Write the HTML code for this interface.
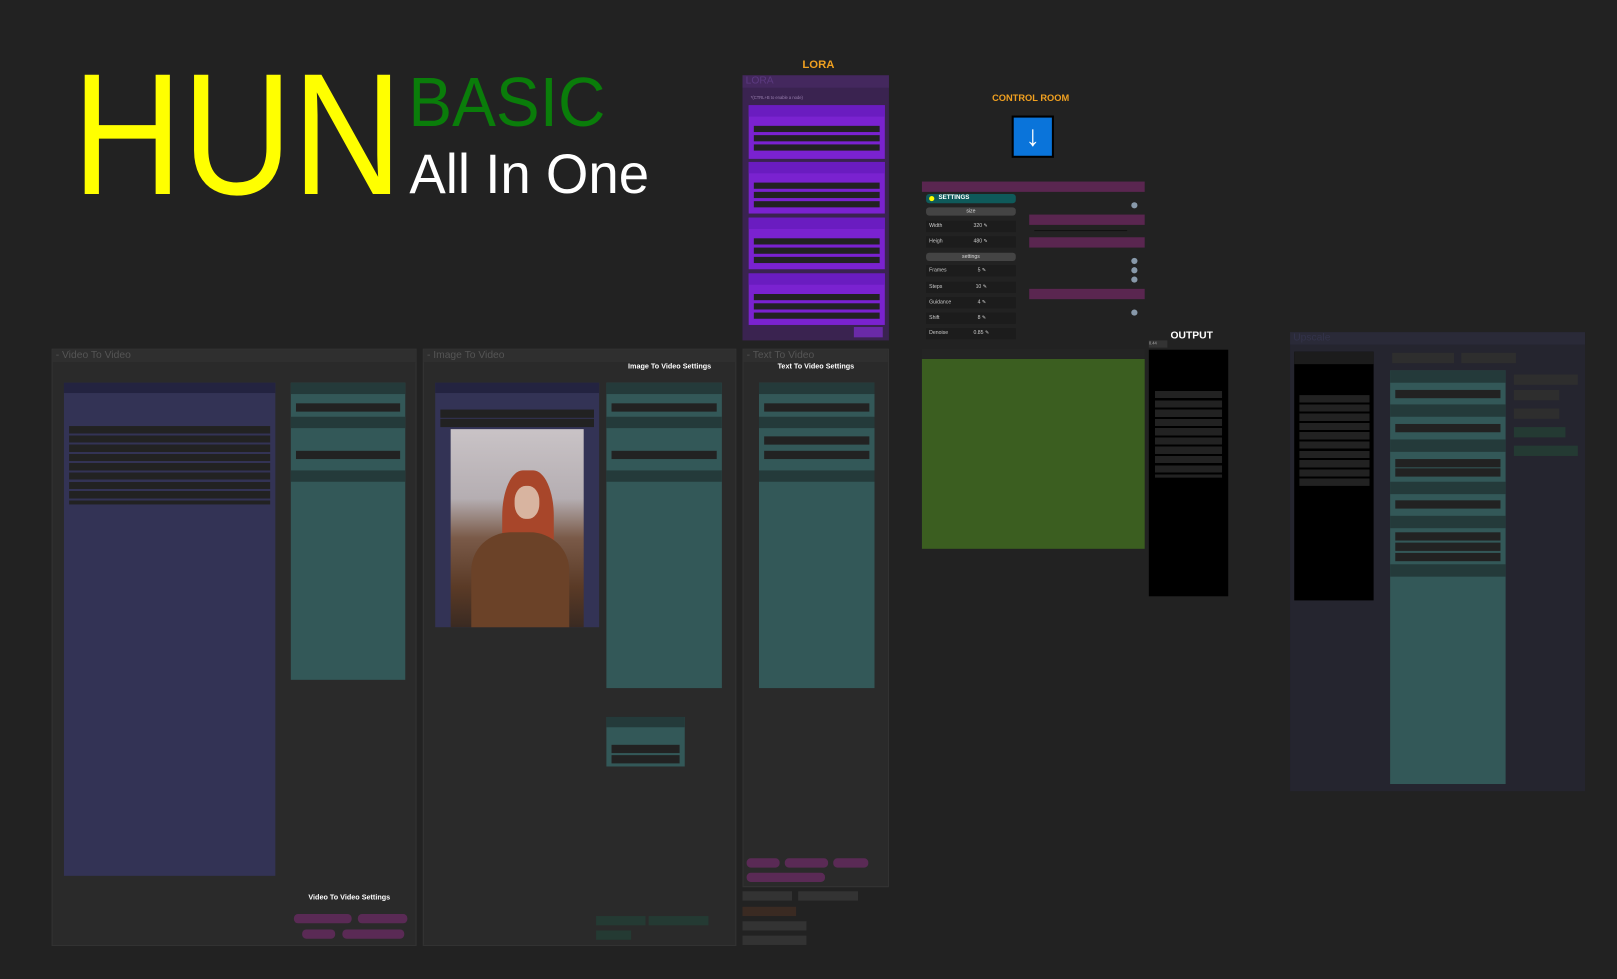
<!DOCTYPE html>
<html><head><meta charset="utf-8"><style>
html,body{margin:0;padding:0;background:#222;width:1617px;height:979px;overflow:hidden}
#c{position:absolute;left:0;top:0;width:1568px;height:949px;transform:scale(1.03125,1.0316);transform-origin:0 0;font-family:"Liberation Sans",sans-serif}
#c div{position:absolute;box-sizing:border-box}
.g{background:#2a2a2a;border:1px solid #333}
.gt{left:0;top:0;right:0;height:12px;background:#2f2f2f;color:#555;font-size:10px;line-height:12px;padding-left:3px}
.pur{background:#333355}
.ph{background:#232340}
.teal{background:#335858}
.th{background:#243a3a}
.bar{background:#222;height:8px}
.lbl{color:#fff;font-size:7px;font-weight:bold;white-space:nowrap}
.pink{background:#5a2a55;border-radius:4px;height:9px}
</style></head><body><div id="c">

<div style="left:70px;top:46px;color:#ffff00;font-size:168px;line-height:168px;transform:scaleX(0.88);transform-origin:0 0;white-space:nowrap">HUN</div>
<div style="left:396px;top:66px;color:#0a7d0a;font-size:67px;line-height:67px;transform:scaleX(0.95);transform-origin:0 0;white-space:nowrap">BASIC</div>
<div style="left:397px;top:142px;color:#fff;font-size:54px;line-height:54px;transform:scaleX(0.98);transform-origin:0 0;white-space:nowrap">All In One</div>

<div style="left:778px;top:57px;color:#f0a020;font-size:11px;font-weight:bold">LORA</div>
<div style="left:962px;top:90px;color:#f0a020;font-size:9px;font-weight:bold">CONTROL ROOM</div>
<div style="left:981px;top:112px;width:41px;height:41px;background:#000;padding:2px"><div style="left:2px;top:2px;width:37px;height:37px;background:#0a74da;color:#fff;font-size:28px;line-height:36px;text-align:center;font-weight:bold">↓</div></div>
<div style="left:1135px;top:320px;color:#fff;font-size:10px;font-weight:bold">OUTPUT</div>

<div style="left:720px;top:73px;width:142px;height:257px;background:#3a2350">
 <div style="left:0;top:0;right:0;height:12px;background:#44285e;color:#5c3a80;font-size:10px;line-height:12px;padding-left:3px">LORA</div>
 <div style="left:8px;top:19px;color:#9a80b0;font-size:4px">*(CTRL+B to enable a node)</div>
 <div style="left:6px;top:29px;width:132px;height:52px;background:#7a22d0"><div style="left:0;top:0;right:0;height:11px;background:#6a1cc0"></div><div class="bar" style="left:5px;top:20px;width:122px;height:6px"></div><div class="bar" style="left:5px;top:29px;width:122px;height:6px"></div><div class="bar" style="left:5px;top:38px;width:122px;height:6px"></div></div>
 <div style="left:6px;top:84px;width:132px;height:50px;background:#7a22d0"><div style="left:0;top:0;right:0;height:11px;background:#6a1cc0"></div><div class="bar" style="left:5px;top:20px;width:122px;height:6px"></div><div class="bar" style="left:5px;top:29px;width:122px;height:6px"></div><div class="bar" style="left:5px;top:38px;width:122px;height:6px"></div></div>
 <div style="left:6px;top:138px;width:132px;height:50px;background:#7a22d0"><div style="left:0;top:0;right:0;height:11px;background:#6a1cc0"></div><div class="bar" style="left:5px;top:20px;width:122px;height:6px"></div><div class="bar" style="left:5px;top:29px;width:122px;height:6px"></div><div class="bar" style="left:5px;top:38px;width:122px;height:6px"></div></div>
 <div style="left:6px;top:192px;width:132px;height:50px;background:#7a22d0"><div style="left:0;top:0;right:0;height:11px;background:#6a1cc0"></div><div class="bar" style="left:5px;top:20px;width:122px;height:6px"></div><div class="bar" style="left:5px;top:29px;width:122px;height:6px"></div><div class="bar" style="left:5px;top:38px;width:122px;height:6px"></div></div>
 <div style="left:108px;top:244px;width:28px;height:10px;background:#6a2aa8"></div>
</div>

<div style="left:894px;top:176px;width:216px;height:10px;background:#5a2650"></div>
<div style="left:898px;top:188px;width:87px;height:9px;background:#0f5a5a;border-radius:3px;color:#fff;font-size:6px;line-height:9px;padding-left:12px;font-weight:bold">SETTINGS<div style="left:3px;top:2px;width:5px;height:5px;border-radius:50%;background:#ff0"></div></div>
<div style="left:898px;top:201px;width:87px;height:8px;background:#444;border-radius:3px;color:#ddd;font-size:5px;line-height:8px;text-align:center">size</div>
<div style="left:898px;top:245px;width:87px;height:8px;background:#444;border-radius:3px;color:#ddd;font-size:5px;line-height:8px;text-align:center">settings</div>
<div style="left:898px;top:214px;width:87px;height:11px;background:#1c1c1c;color:#ccc;font-size:5px;line-height:11px;padding-left:3px">Width<span style="position:absolute;left:46px">320 ✎</span></div>
<div style="left:898px;top:229px;width:87px;height:11px;background:#1c1c1c;color:#ccc;font-size:5px;line-height:11px;padding-left:3px">Heigh<span style="position:absolute;left:46px">480 ✎</span></div>
<div style="left:898px;top:257px;width:87px;height:11px;background:#1c1c1c;color:#ccc;font-size:5px;line-height:11px;padding-left:3px">Frames<span style="position:absolute;left:50px">5 ✎</span></div>
<div style="left:898px;top:273px;width:87px;height:11px;background:#1c1c1c;color:#ccc;font-size:5px;line-height:11px;padding-left:3px">Steps<span style="position:absolute;left:48px">10 ✎</span></div>
<div style="left:898px;top:288px;width:87px;height:11px;background:#1c1c1c;color:#ccc;font-size:5px;line-height:11px;padding-left:3px">Guidance<span style="position:absolute;left:50px">4 ✎</span></div>
<div style="left:898px;top:303px;width:87px;height:11px;background:#1c1c1c;color:#ccc;font-size:5px;line-height:11px;padding-left:3px">Shift<span style="position:absolute;left:50px">8 ✎</span></div>
<div style="left:898px;top:318px;width:87px;height:11px;background:#1c1c1c;color:#ccc;font-size:5px;line-height:11px;padding-left:3px">Denoise<span style="position:absolute;left:46px">0.85 ✎</span></div>
<div style="left:998px;top:208px;width:112px;height:10px;background:#5a2650"></div>
<div style="left:998px;top:230px;width:112px;height:10px;background:#5a2650"></div>
<div style="left:998px;top:280px;width:112px;height:10px;background:#5a2650"></div>
<div style="left:1097px;top:196px;width:6px;height:6px;border-radius:50%;background:#8899aa"></div>
<div style="left:1097px;top:250px;width:6px;height:6px;border-radius:50%;background:#8899aa"></div>
<div style="left:1097px;top:259px;width:6px;height:6px;border-radius:50%;background:#8899aa"></div>
<div style="left:1097px;top:268px;width:6px;height:6px;border-radius:50%;background:#8899aa"></div>
<div style="left:1097px;top:300px;width:6px;height:6px;border-radius:50%;background:#8899aa"></div>
<div style="left:1003px;top:223px;width:90px;height:1px;background:#111"></div>

<div style="left:894px;top:338px;width:216px;height:10px;background:#242424"></div>
<div style="left:894px;top:348px;width:216px;height:184px;background:#3b5e20"></div>
<div style="left:1114px;top:330px;width:18px;height:7px;background:#333;color:#aaa;font-size:4px">0.44</div>
<div style="left:1114px;top:339px;width:77px;height:239px;background:#000">
 <div style="left:6px;top:40px;width:65px;height:84px;background:repeating-linear-gradient(#222 0 7px,#000 7px 9px)"></div>
</div>

<div style="left:1251px;top:322px;width:286px;height:445px;background:#25252f">
 <div style="left:0;top:0;right:0;height:12px;background:#2a2a38;color:#33334a;font-size:10px;line-height:12px;padding-left:3px">Upscale</div>
 <div style="left:4px;top:19px;width:77px;height:241px;background:#000"><div style="left:0;top:0;right:0;height:12px;background:#1c1c1c"></div><div style="left:5px;top:42px;width:68px;height:88px;background:repeating-linear-gradient(#222 0 7px,#000 7px 9px)"></div></div>
 <div style="left:99px;top:20px;width:60px;height:10px;background:#2e2e2e"></div>
 <div style="left:166px;top:20px;width:53px;height:10px;background:#2e2e2e"></div>
 <div style="left:97px;top:37px;width:112px;height:401px;background:#335858"></div>
 <div style="left:97px;top:37px;width:112px;height:12px;background:#243a3a"></div>
 <div style="left:97px;top:70px;width:112px;height:12px;background:#243a3a"></div>
 <div style="left:97px;top:104px;width:112px;height:12px;background:#243a3a"></div>
 <div style="left:97px;top:145px;width:112px;height:12px;background:#243a3a"></div>
 <div style="left:97px;top:178px;width:112px;height:12px;background:#243a3a"></div>
 <div style="left:97px;top:225px;width:112px;height:12px;background:#243a3a"></div>
 <div class="bar" style="left:102px;top:56px;width:102px"></div>
 <div class="bar" style="left:102px;top:89px;width:102px"></div>
 <div class="bar" style="left:102px;top:123px;width:102px"></div>
 <div class="bar" style="left:102px;top:132px;width:102px"></div>
 <div class="bar" style="left:102px;top:163px;width:102px"></div>
 <div class="bar" style="left:102px;top:194px;width:102px"></div>
 <div class="bar" style="left:102px;top:204px;width:102px"></div>
 <div class="bar" style="left:102px;top:214px;width:102px"></div>
 <div style="left:217px;top:41px;width:62px;height:10px;background:#2e2e2e"></div>
 <div style="left:217px;top:56px;width:44px;height:10px;background:#2e2e2e"></div>
 <div style="left:217px;top:74px;width:44px;height:10px;background:#2e2e2e"></div>
 <div style="left:217px;top:92px;width:50px;height:10px;background:#243a33"></div>
 <div style="left:217px;top:110px;width:62px;height:10px;background:#243a33"></div>
</div>

<div class="g" style="left:50px;top:338px;width:354px;height:579px"><div class="gt">- Video To Video</div>
 <div class="pur" style="left:11px;top:32px;width:205px;height:478px"><div class="ph" style="left:0;top:0;right:0;height:10px"></div>
  <div style="left:5px;top:42px;width:195px;height:76px;background:repeating-linear-gradient(#222 0 7px,#333355 7px 9px)"></div></div>
 <div class="teal" style="left:231px;top:32px;width:111px;height:288px">
  <div class="th" style="left:0;top:0;right:0;height:11px"></div><div class="th" style="left:0;top:33px;right:0;height:11px"></div><div class="th" style="left:0;top:85px;right:0;height:11px"></div>
  <div class="bar" style="left:5px;top:20px;width:101px"></div><div class="bar" style="left:5px;top:66px;width:101px"></div></div>
 <div class="lbl" style="left:248px;top:528px">Video To Video Settings</div>
 <div class="pink" style="left:234px;top:547px;width:56px"></div><div class="pink" style="left:296px;top:547px;width:48px"></div>
 <div class="pink" style="left:242px;top:562px;width:32px"></div><div class="pink" style="left:281px;top:562px;width:60px"></div>
</div>

<div class="g" style="left:410px;top:338px;width:304px;height:579px"><div class="gt">- Image To Video</div>
 <div class="lbl" style="left:198px;top:13px">Image To Video Settings</div>
 <div class="pur" style="left:11px;top:32px;width:159px;height:237px"><div class="ph" style="left:0;top:0;right:0;height:10px"></div>
  <div class="bar" style="left:5px;top:26px;width:149px"></div><div class="bar" style="left:5px;top:35px;width:149px"></div>
  <div style="left:15px;top:45px;width:129px;height:192px;background:linear-gradient(180deg,#c9c3c6 0%,#b5aeb2 35%,#7a5a48 55%,#5a3a26 80%,#3a2a22 100%)">
   <div style="left:50px;top:40px;width:50px;height:110px;border-radius:40% 40% 30% 30%;background:#a8462a"></div>
   <div style="left:62px;top:55px;width:24px;height:32px;border-radius:45%;background:#d8b4a0"></div>
   <div style="left:20px;top:100px;width:95px;height:92px;border-radius:40% 40% 0 0;background:#6b4228"></div>
  </div></div>
 <div class="teal" style="left:177px;top:32px;width:112px;height:296px">
  <div class="th" style="left:0;top:0;right:0;height:11px"></div><div class="th" style="left:0;top:33px;right:0;height:11px"></div><div class="th" style="left:0;top:85px;right:0;height:11px"></div>
  <div class="bar" style="left:5px;top:20px;width:102px"></div><div class="bar" style="left:5px;top:66px;width:102px"></div></div>
 <div class="teal" style="left:177px;top:356px;width:76px;height:48px"><div class="th" style="left:0;top:0;right:0;height:10px"></div><div class="bar" style="left:5px;top:27px;width:66px"></div><div class="bar" style="left:5px;top:37px;width:66px"></div></div>
 <div style="left:167px;top:549px;width:48px;height:9px;background:#243a33"></div>
 <div style="left:218px;top:549px;width:58px;height:9px;background:#243a33"></div>
 <div style="left:167px;top:563px;width:34px;height:9px;background:#243a33"></div>
</div>

<div class="g" style="left:720px;top:338px;width:142px;height:522px"><div class="gt">- Text To Video</div>
 <div class="lbl" style="left:33px;top:13px">Text To Video Settings</div>
 <div class="teal" style="left:15px;top:32px;width:112px;height:296px">
  <div class="th" style="left:0;top:0;right:0;height:11px"></div><div class="th" style="left:0;top:33px;right:0;height:11px"></div><div class="th" style="left:0;top:85px;right:0;height:11px"></div>
  <div class="bar" style="left:5px;top:20px;width:102px"></div><div class="bar" style="left:5px;top:52px;width:102px"></div><div class="bar" style="left:5px;top:66px;width:102px"></div></div>
 <div class="pink" style="left:3px;top:493px;width:32px"></div><div class="pink" style="left:40px;top:493px;width:42px"></div><div class="pink" style="left:87px;top:493px;width:34px"></div>
 <div class="pink" style="left:3px;top:507px;width:76px"></div>
</div>
<div style="left:720px;top:864px;width:48px;height:9px;background:#333"></div>
<div style="left:774px;top:864px;width:58px;height:9px;background:#333"></div>
<div style="left:720px;top:879px;width:52px;height:9px;background:#3a2a22"></div>
<div style="left:720px;top:893px;width:62px;height:9px;background:#333"></div>
<div style="left:720px;top:907px;width:62px;height:9px;background:#333"></div>

</div></body></html>
